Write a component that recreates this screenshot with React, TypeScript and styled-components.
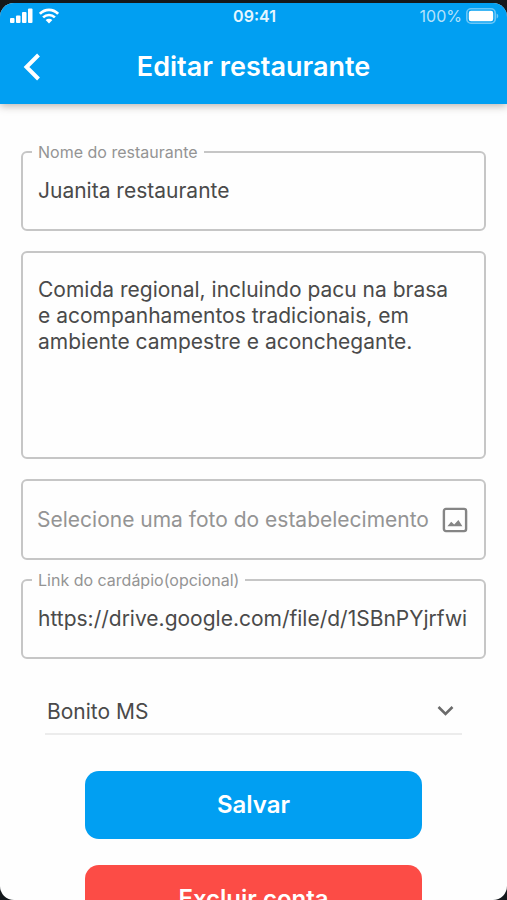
import React from "react";
import styled, { createGlobalStyle } from "styled-components";

const blue = "#019ff2";
const outline = "#c6c6c6";
const ink = "#4a4a4a";
const muted = "#949494";

const GlobalStyle = createGlobalStyle`
  *, *::before, *::after { box-sizing: border-box; }
  body {
    margin: 0;
    background: #14181c;
    font-family: Inter, "Liberation Sans", sans-serif;
  }
  button, input, select, textarea { font: inherit; }
`;

const Device = styled.div`
  height: 100vh;
  padding-top: 3px;
  display: flex;
`;

const Screen = styled.div`
  flex: 1;
  min-width: 0;
  display: flex;
  flex-direction: column;
  overflow: hidden;
  border-radius: 14px;
  background: #fefefe;
`;

const AppBar = styled.header`
  flex: none;
  background: ${blue};
  color: #fff;
  box-shadow: 0 2px 8px rgba(60, 40, 30, 0.35);
  z-index: 1;
`;

const StatusBar = styled.div`
  display: grid;
  grid-template-columns: 1fr auto 1fr;
  align-items: center;
  height: 26px;
  padding: 0 8px 0 10px;
  font-size: 16px;
`;

const StatusGroup = styled.div<{ $end?: boolean }>`
  display: flex;
  align-items: center;
  justify-content: ${(p) => (p.$end ? "flex-end" : "flex-start")};
  gap: ${(p) => (p.$end ? 4 : 6)}px;
  color: ${(p) => (p.$end ? "#b4e2fb" : "#fff")};
`;

const Clock = styled.time`
  font-weight: 600;
  color: #e4f6ff;
`;

const TitleBar = styled.div`
  display: grid;
  grid-template-columns: 64px 1fr 64px;
  align-items: center;
  height: 75px;
`;

const BackButton = styled.button`
  display: grid;
  place-items: center;
  height: 48px;
  padding: 0;
  border: 0;
  background: none;
  color: #fff;
  cursor: pointer;
`;

const Title = styled.h1`
  margin: 0;
  text-align: center;
  font-size: 27px;
  font-weight: 600;
  white-space: nowrap;
`;

const Form = styled.form`
  flex: 1;
  min-height: 0;
  overflow-y: auto;
  scrollbar-width: none;
  display: flex;
  flex-direction: column;
  gap: 20px;
  padding: 48px 21px 24px;
  font-size: 21px;
  line-height: 26px;
  color: ${ink};
  & > * { flex: none; }
`;

const OutlinedField = styled.fieldset`
  min-width: 0;
  margin: -8px 0 0;
  padding: 0;
  border: 2px solid ${outline};
  border-radius: 6px;
`;

const Legend = styled.legend`
  margin-left: 9px;
  padding: 0 6px;
  font-size: 16px;
  line-height: 16px;
  color: ${muted};
`;

const TextInput = styled.input`
  display: block;
  width: 100%;
  height: 69px;
  padding: 0 15px 8px;
  border: 0;
  outline: 0;
  background: none;
  color: inherit;
`;

const TextArea = styled.textarea`
  display: block;
  width: 100%;
  height: 208px;
  padding: 24px 24px 24px 15px;
  border: 2px solid ${outline};
  border-radius: 6px;
  outline: 0;
  resize: none;
  background: none;
  color: inherit;
`;

const PhotoButton = styled.button`
  display: flex;
  align-items: center;
  justify-content: space-between;
  height: 81px;
  padding: 0 16px 0 14px;
  border: 2px solid ${outline};
  border-radius: 6px;
  background: none;
  color: ${muted};
  text-align: left;
  cursor: pointer;
`;

const City = styled.div`
  display: grid;
  align-items: center;
  margin: 10px 24px 16px;
  border-bottom: 2px solid #ececec;

  & > * { grid-area: 1 / 1; }
  svg { justify-self: end; margin-right: 6px; pointer-events: none; }
`;

const CitySelect = styled.select`
  width: 100%;
  height: 44px;
  padding: 2px 2px 0;
  border: 0;
  outline: 0;
  appearance: none;
  background: none;
  color: inherit;
`;

const Actions = styled.div`
  display: grid;
  gap: 26px;
  padding: 0 64px;
`;

const ActionButton = styled.button<{ $danger?: boolean }>`
  height: 68px;
  border: 0;
  border-radius: 14px;
  background: ${(p) => (p.$danger ? "#fc4c46" : blue)};
  color: #fff;
  font-size: 24px;
  font-weight: 600;
  cursor: pointer;
`;

const SignalIcon = () => (
  <svg width="23" height="16" viewBox="0 0 23 16" fill="currentColor" aria-hidden="true">
    <rect x="0" y="10" width="4.5" height="5" rx="1" />
    <rect x="6" y="7.5" width="4.5" height="7.5" rx="1" />
    <rect x="12" y="4" width="4.5" height="11" rx="1" />
    <rect x="18" y="0.5" width="4.5" height="14.5" rx="1" />
  </svg>
);

const WifiIcon = () => (
  <svg width="20" height="16" viewBox="0 0 20 16" aria-hidden="true">
    <g fill="none" stroke="currentColor" strokeWidth="2.6">
      <path d="M0.9 5.8C6 0.6 14 0.6 19.1 5.8" />
      <path d="M4.1 9.4C7.4 6.2 12.6 6.2 15.9 9.4" />
    </g>
    <path d="M6.6 11.9C8.6 10.2 11.4 10.2 13.4 11.9L10 15.4Z" fill="currentColor" />
  </svg>
);

const BatteryIcon = () => (
  <svg width="33" height="16" viewBox="0 0 33 16" aria-hidden="true">
    <rect x="0.8" y="0.8" width="28.4" height="14.4" rx="4.2" fill="none" stroke="#6cc7f7" strokeWidth="1.6" />
    <rect x="2.8" y="2.8" width="24.4" height="10.4" rx="2.2" fill="#fff" />
    <path d="M30.6 5.4C32.8 6.4 32.8 9.6 30.6 10.6Z" fill="#6cc7f7" />
  </svg>
);

const BackIcon = () => (
  <svg width="18" height="28" viewBox="0 0 18 28" fill="none" aria-hidden="true">
    <path d="M15.5 2L3.5 14L15.5 26" stroke="currentColor" strokeWidth="4" />
  </svg>
);

const PhotoIcon = () => (
  <svg width="26" height="26" viewBox="0 0 26 26" aria-hidden="true">
    <rect x="1.9" y="1.9" width="22.2" height="22.2" rx="2" fill="none" stroke="#858585" strokeWidth="2.4" />
    <path d="M5.4 19.2L9.2 14.8L12.2 17.6L16.4 13L20.4 19.2Z" fill="#858585" />
  </svg>
);

const ChevronIcon = () => (
  <svg width="20" height="12" viewBox="0 0 20 12" fill="none" aria-hidden="true">
    <path d="M2.5 2L9.5 9L16.5 2" stroke="#6b6b6b" strokeWidth="2.6" />
  </svg>
);

export default function App() {
  return (
    <Device>
      <GlobalStyle />
      <Screen>
        <AppBar>
          <StatusBar>
            <StatusGroup>
              <SignalIcon />
              <WifiIcon />
            </StatusGroup>
            <Clock>09:41</Clock>
            <StatusGroup $end>
              <span>100%</span>
              <BatteryIcon />
            </StatusGroup>
          </StatusBar>
          <TitleBar>
            <BackButton type="button" aria-label="Voltar">
              <BackIcon />
            </BackButton>
            <Title>Editar restaurante</Title>
          </TitleBar>
        </AppBar>
        <Form onSubmit={(e) => e.preventDefault()}>
          <OutlinedField>
            <Legend>
              <label htmlFor="nome">Nome do restaurante</label>
            </Legend>
            <TextInput id="nome" type="text" defaultValue="Juanita restaurante" />
          </OutlinedField>
          <TextArea
            aria-label="Descrição"
            defaultValue="Comida regional, incluindo pacu na brasa e acompanhamentos tradicionais, em ambiente campestre e aconchegante."
          />
          <PhotoButton type="button">
            <span>Selecione uma foto do estabelecimento</span>
            <PhotoIcon />
          </PhotoButton>
          <OutlinedField>
            <Legend>
              <label htmlFor="link">Link do cardápio(opcional)</label>
            </Legend>
            <TextInput id="link" type="text" defaultValue="https://drive.google.com/file/d/1SBnPYjrfwi" />
          </OutlinedField>
          <City>
            <CitySelect aria-label="Cidade" defaultValue="bonito">
              <option value="bonito">Bonito MS</option>
            </CitySelect>
            <ChevronIcon />
          </City>
          <Actions>
            <ActionButton type="submit">Salvar</ActionButton>
            <ActionButton type="button" $danger>
              Excluir conta
            </ActionButton>
          </Actions>
        </Form>
      </Screen>
    </Device>
  );
}
